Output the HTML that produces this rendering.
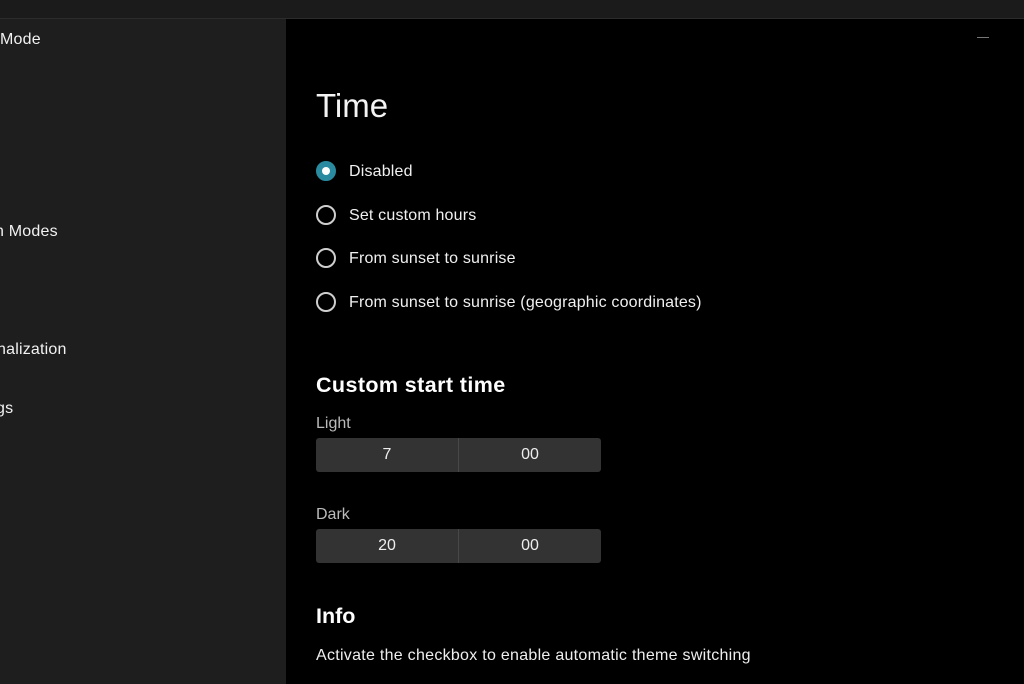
<!DOCTYPE html>
<html><head><meta charset="utf-8"><style>
body{margin:0;width:1024px;height:684px;overflow:hidden;background:#000;font-family:"Liberation Sans",sans-serif;color:#fff;position:relative}
.top{position:absolute;left:0;top:0;width:1024px;height:18px;background:#1b1b1b;border-bottom:1px solid #2c2c2c}
.side{position:absolute;left:0;top:19px;width:286px;height:665px;background:#1e1e1e}
.side div{position:absolute;font-size:16px;color:#f2f2f2;letter-spacing:.2px;white-space:nowrap}
.t{position:absolute;white-space:nowrap}
.r{position:absolute;left:316px;width:20px;height:20px;border:2px solid #cfcfcf;border-radius:50%;box-sizing:border-box}
.lbl{position:absolute;left:349px;font-size:16px;color:#f0f0f0;letter-spacing:.18px;white-space:nowrap}
.box{position:absolute;left:316px;width:285px;height:34px;background:#333;border-radius:3px}
.box span{position:absolute;top:8px;font-size:16px;color:#eee;width:142px;text-align:center}
.box i{position:absolute;left:142px;top:0;width:1px;height:34px;background:#484848}
</style></head><body>
<div class="top"></div>
<div class="side">
<div style="left:0px;top:12px">Mode</div>
<div style="left:-5px;top:204px">n Modes</div>
<div style="left:-3px;top:322px">nalization</div>
<div style="left:-4px;top:381px">gs</div>
</div>
<div style="position:absolute;left:977px;top:37px;width:12px;height:1px;background:#777"></div>
<div class="t" style="left:316px;top:87px;font-size:33px;color:#f4f4f4">Time</div>
<div class="r" style="top:161px;background:#2a8ba0;border-color:#2a8ba0"><div style="position:absolute;left:4px;top:4px;width:8px;height:8px;border-radius:50%;background:#fff"></div></div>
<div class="lbl" style="top:163px">Disabled</div>
<div class="r" style="top:205px"></div><div class="lbl" style="top:207px">Set custom hours</div>
<div class="r" style="top:248px"></div><div class="lbl" style="top:250px">From sunset to sunrise</div>
<div class="r" style="top:292px"></div><div class="lbl" style="top:294px">From sunset to sunrise (geographic coordinates)</div>
<div class="t" style="left:316px;top:373px;font-size:21.5px;font-weight:bold;letter-spacing:.4px">Custom start time</div>
<div class="t" style="left:316px;top:415px;font-size:16px;color:#bbb">Light</div>
<div class="box" style="top:438px"><span style="left:0">7</span><i></i><span style="left:143px">00</span></div>
<div class="t" style="left:316px;top:506px;font-size:16px;color:#bbb">Dark</div>
<div class="box" style="top:529px"><span style="left:0">20</span><i></i><span style="left:143px">00</span></div>
<div class="t" style="left:316px;top:604px;font-size:21.5px;font-weight:bold">Info</div>
<div class="t" style="left:316px;top:647px;font-size:16px;color:#eee;letter-spacing:.28px">Activate the checkbox to enable automatic theme switching</div>
</body></html>
